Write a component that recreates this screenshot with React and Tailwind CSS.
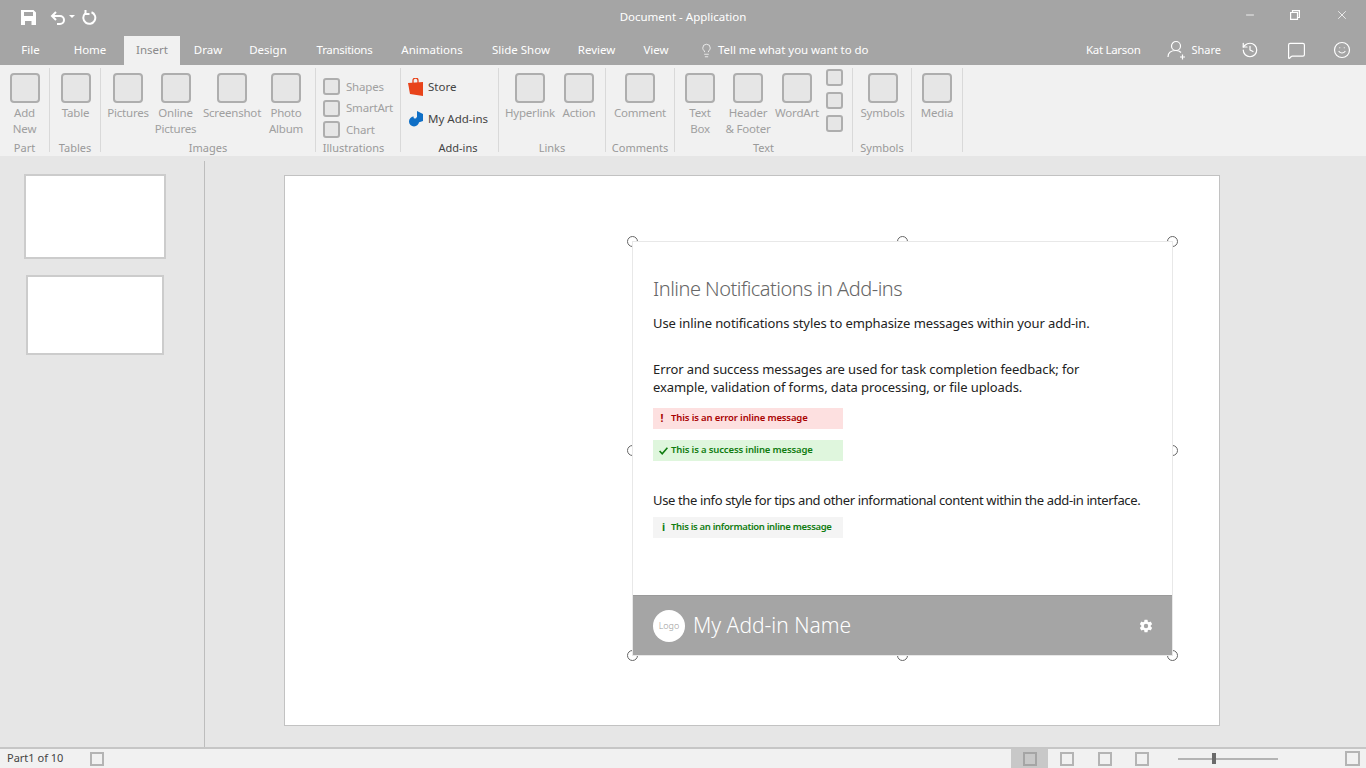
import { History, Lightbulb, MessageSquare, Smile, X, Minus } from "lucide-react";
import { IoSettingsSharp } from "react-icons/io5";

const tabs = [
  { label: "File", className: "w-[61px]" },
  { label: "Home", className: "w-[58px] mr-[5px]" },
  { label: "Insert", className: "w-[56px] bg-[#f1f1f1] text-[#8a8a8a]" },
  { label: "Draw", className: "w-[56px]" },
  { label: "Design", className: "w-[64px]" },
  { label: "Transitions", className: "w-[89px] tracking-[-0.3px]" },
  { label: "Animations", className: "w-[86px]" },
  { label: "Slide Show", className: "w-[92px]" },
  { label: "Review", className: "w-[59px]" },
  { label: "View", className: "w-[60px]" },
];

const BigBox = () => (
  <div className="w-[30px] h-[30px] rounded-[4px] border-2 border-[#aeaeae] bg-[#e6e6e6]" />
);

const SmallBox = () => (
  <div className="w-[17px] h-[17px] rounded-[3px] border-2 border-[#aeaeae] bg-[#e6e6e6] shrink-0" />
);

const BigItem = ({ lines, className }) => (
  <div className={`flex flex-col items-center pt-[5px] ${className}`}>
    <BigBox />
    <div className="mt-[2px] text-center text-[11.5px] tracking-[-0.2px] leading-[16px] text-[#a0a0a0] whitespace-nowrap">
      {lines.map((line) => (
        <div key={line}>{line}</div>
      ))}
    </div>
  </div>
);

const Group = ({ label, className, labelClass = "", dark, children }) => (
  <div className={`relative h-[84px] border-r border-[#d9d9d9] shrink-0 flex ${className}`}>
    {children}
    <div
      className={`absolute left-0 right-0 bottom-[-4px] text-center text-[11px] leading-[16px] ${labelClass} ${
        dark ? "text-[#444444]" : "text-[#999999]"
      }`}
    >
      {label}
    </div>
  </div>
);

const Handle = ({ className }) => (
  <div className={`absolute w-[11px] h-[11px] rounded-full border border-[#666666] bg-white ${className}`} />
);

const Message = ({ icon, text, className }) => (
  <div className={`w-[190px] h-[21px] flex items-center text-[9.5px] font-semibold ${className}`}>
    <span className="w-[18px] flex justify-center shrink-0">{icon}</span>
    <span className="whitespace-nowrap">{text}</span>
  </div>
);

const StatusBox = () => <div className="w-[14px] h-[14px] border-2 border-[#b4b4b4]" />;

export default function App() {
  return (
    <div
      className="w-[1366px] h-[768px] overflow-hidden flex flex-col bg-[#e6e6e6]"
      style={{ fontFamily: '"Noto Sans", "Open Sans", sans-serif' }}
    >
      {/* Title bar */}
      <div className="h-[36px] bg-[#a5a5a5] flex items-center relative shrink-0 text-white">
        <div className="flex items-center pl-[21px] pb-[2px]">
          <svg width="15" height="15" viewBox="0 0 15 15" fill="white">
            <path d="M0 0h12.5L15 2.5V15H0zM3 2v4h9V2zM4 11v4h6.5v-4z" fillRule="evenodd" />
          </svg>
          <svg className="ml-[14px]" width="16" height="15" viewBox="0 0 16 15" fill="none" stroke="white" strokeWidth="2">
            <path d="M6 2 2 6l4 4M2 6h8a4 4 0 0 1 0 8H7" />
          </svg>
          <svg className="ml-[3px]" width="6" height="4" viewBox="0 0 6 4" fill="white">
            <path d="M0 0h6L3 3z" />
          </svg>
          <svg className="ml-[7px]" width="15" height="15" viewBox="0 0 15 15" fill="none" stroke="white" strokeWidth="2">
            <path d="M9.5 2.2A6 6 0 1 1 3 3.6M3.5 0v4h4" />
          </svg>
        </div>
        <div className="absolute inset-x-0 text-center text-[11.5px] pb-[2px]">Document - Application</div>
        <div className="ml-auto flex items-center pr-[17px] pb-[6px]">
          <Minus size={12} strokeWidth={1.6} />
          <svg className="ml-[34px]" width="10" height="10" viewBox="0 0 10 10" fill="none" stroke="white" strokeWidth="1.2">
            <path d="M2.5 2.5V.6h6.9v6.9H7.5M.6 2.5h6.9v6.9H.6z" />
          </svg>
          <X className="ml-[35px]" size={14} strokeWidth={1.3} />
        </div>
      </div>

      {/* Tabs */}
      <div className="h-[29px] bg-[#a5a5a5] flex items-stretch text-white shrink-0 text-[11.5px] relative">
        {tabs.map((tab) => (
          <div key={tab.label} className={`flex items-center justify-center pb-[1px] whitespace-nowrap ${tab.className}`}>
            {tab.label}
          </div>
        ))}
        <div className="flex items-center ml-[13px] pb-[1px]">
          <Lightbulb size={15} strokeWidth={1.2} />
          <span className="ml-[4px] tracking-[-0.05px]">Tell me what you want to do</span>
        </div>
        <div className="ml-auto flex items-center pr-[15px] pb-[1px]">
          <span className="tracking-[-0.3px]">Kat Larson</span>
          <svg className="ml-[27px]" width="20" height="20" viewBox="0 0 20 20" fill="none" stroke="white" strokeWidth="1.2">
            <circle cx="9" cy="6" r="4.5" />
            <path d="M1 17c0-4 3-6.5 8-6.5 2 0 4 .8 5 2M15.5 14.5v5M13 17h5" />
          </svg>
          <span className="ml-[4px] text-[11px]">Share</span>
          <History className="ml-[20px]" size={18} strokeWidth={1.6} />
          <MessageSquare className="ml-[28px]" size={19} strokeWidth={1.5} />
          <Smile className="ml-[27px]" size={18} strokeWidth={1.6} />
        </div>
      </div>

      {/* Ribbon */}
      <div className="h-[91px] bg-[#f1f1f1] flex shrink-0 pt-[3px]">
        <Group label="Part" className="w-[50px]">
          <BigItem className="w-[49px]" lines={["Add", "New"]} />
        </Group>
        <Group label="Tables" className="w-[51px] pl-[1px]">
          <BigItem className="w-[49px]" lines={["Table"]} />
        </Group>
        <Group label="Images" className="w-[215px] pl-[3px]">
          <BigItem className="w-[48px]" lines={["Pictures"]} />
          <BigItem className="w-[47px]" lines={["Online", "Pictures"]} />
          <BigItem className="w-[66px]" lines={["Screenshot"]} />
          <BigItem className="w-[42px]" lines={["Photo", "Album"]} />
        </Group>
        <Group label="Illustrations" labelClass="pr-[9px]" className="w-[85px] pl-[7px]">
          <div className="flex flex-col gap-[4.5px] pt-[10px] text-[11.5px] tracking-[-0.2px] text-[#a0a0a0]">
            {["Shapes", "SmartArt", "Chart"].map((name) => (
              <div key={name} className="flex items-center gap-[6px] h-[17px]">
                <SmallBox />
                <span>{name}</span>
              </div>
            ))}
          </div>
        </Group>
        <Group label="Add-ins" dark labelClass="pl-[17px]" className="w-[98px] pl-[7px]">
          <div className="flex flex-col pt-[10px] text-[11.5px] text-[#444444]">
            <div className="flex items-center h-[18px]">
              <svg width="16" height="18" viewBox="0 0 16 18">
                <path d="M0 5 15 4v14L2 16z" fill="#e8431a" />
                <path d="M5 5V2.5a2.5 2.5 0 0 1 5 0V5" fill="none" stroke="#e8431a" strokeWidth="1.3" />
              </svg>
              <span className="ml-[4px]">Store</span>
            </div>
            <div className="flex items-center h-[16px] mt-[15px]">
              <svg className="ml-[1px]" width="15" height="16" viewBox="0 0 15 16">
                <path d="M8 0l6 3v7l-6 2z" fill="#0f6fc6" />
                <circle cx="5" cy="10.5" r="5" fill="#0f6fc6" />
                <circle cx="6" cy="6" r="1.5" fill="#f1f1f1" />
              </svg>
              <span className="ml-[4px]">My Add-ins</span>
            </div>
          </div>
        </Group>
        <Group label="Links" className="w-[107px] pl-[6px]">
          <BigItem className="w-[50px]" lines={["Hyperlink"]} />
          <BigItem className="w-[48px]" lines={["Action"]} />
        </Group>
        <Group label="Comments" className="w-[69px]">
          <BigItem className="w-[68px]" lines={["Comment"]} />
        </Group>
        <Group label="Text" className="w-[178px] pl-[5px]">
          <BigItem className="w-[40px]" lines={["Text", "Box"]} />
          <BigItem className="w-[56px]" lines={["Header", "& Footer"]} />
          <BigItem className="w-[42px]" lines={["WordArt"]} />
          <div className="ml-[8px] flex flex-col gap-[6px] pt-[1px] h-[66px]">
            <SmallBox />
            <SmallBox />
            <SmallBox />
          </div>
        </Group>
        <Group label="Symbols" className="w-[59px] pl-[1px]">
          <BigItem className="w-[58px]" lines={["Symbols"]} />
        </Group>
        <Group label="" className="w-[51px]">
          <BigItem className="w-[50px]" lines={["Media"]} />
        </Group>
      </div>

      {/* Workspace */}
      <div className="flex-1 flex min-h-0">
        <div className="w-[205px] shrink-0 pt-[5px]">
          <div className="h-full border-r border-[#bdbdbd] pt-[13px] flex flex-col items-center pr-[15px] gap-[16px]">
            <div className="w-[142px] h-[85px] bg-white border-2 border-[#cccccc]" />
            <div className="w-[138px] h-[80px] bg-white border-2 border-[#cccccc]" />
          </div>
        </div>
        <div className="flex-1 pt-[19px] pl-[79px]">
          <div className="w-[936px] h-[551px] bg-white border border-[#c2c2c2] pl-[347px] pt-[65px]">
            <div className="relative w-[541px] h-[415px]">
              <Handle className="left-[-5px] top-[-5px]" />
              <Handle className="left-[265px] top-[-5px]" />
              <Handle className="right-[-5px] top-[-5px]" />
              <Handle className="left-[-5px] top-[204px]" />
              <Handle className="right-[-5px] top-[204px]" />
              <Handle className="left-[-5px] bottom-[-5px]" />
              <Handle className="left-[265px] bottom-[-5px]" />
              <Handle className="right-[-5px] bottom-[-5px]" />
              <div className="relative h-full bg-white border border-[#e8e8e8] flex flex-col">
                <div className="flex-1 pl-[20px] text-[#222222]">
                  <h1 className="pt-[33px] text-[20px] tracking-[-0.5px] leading-[28px] font-light text-[#666666] whitespace-nowrap">
                    Inline Notifications in Add-ins
                  </h1>
                  <p className="mt-[11px] text-[13px] tracking-[-0.1px] leading-[18px] whitespace-nowrap">
                    Use inline notifications styles to emphasize messages within your add-in.
                  </p>
                  <p className="mt-[28px] text-[13px] tracking-[-0.1px] leading-[18px] whitespace-nowrap">
                    Error and success messages are used for task completion feedback; for
                    <br />
                    example, validation of forms, data processing, or file uploads.
                  </p>
                  <Message
                    className="mt-[12px] bg-[#fde0e0] text-[#a80000] tracking-[-0.13px]"
                    icon={<span className="font-bold text-[10.5px]">!</span>}
                    text="This is an error inline message"
                  />
                  <Message
                    className="mt-[11px] bg-[#dff6dd] text-[#107c10] tracking-[-0.14px]"
                    icon={
                      <svg className="ml-[3px]" width="9" height="8" viewBox="0 0 9 8" fill="none" stroke="#107c10" strokeWidth="1.6">
                        <path d="M.6 4 3.2 6.8 8.4.8" />
                      </svg>
                    }
                    text="This is a success inline message"
                  />
                  <p className="mt-[30px] text-[13px] tracking-[-0.37px] leading-[18px] whitespace-nowrap">
                    Use the info style for tips and other informational content within the add-in interface.
                  </p>
                  <Message
                    className="mt-[8px] bg-[#f4f4f4] text-[#107c10] tracking-[-0.32px]"
                    icon={<span className="font-bold text-[10.5px] ml-[3px]">i</span>}
                    text="This is an information inline message"
                  />
                </div>
                <div className="h-[60px] bg-[#a5a5a5] border-t border-[#9a9a9a] flex items-center pl-[20px] pr-[18px] text-white">
                  <div className="w-[32px] h-[32px] rounded-full bg-white flex items-center justify-center text-[9px] font-light text-[#9b9b9b]">
                    Logo
                  </div>
                  <span className="ml-[8px] text-[21px] font-light">My Add-in Name</span>
                  <IoSettingsSharp className="ml-auto mr-[1px]" size={14} />
                </div>
              </div>
            </div>
          </div>
        </div>
      </div>

      {/* Status bar */}
      <div className="h-[21px] shrink-0 bg-[#f1f1f1] border-t-2 border-[#c6c6c6] flex items-center text-[11px] text-[#444444]">
        <span className="ml-[7px] w-[83px]">Part1 of 10</span>
        <StatusBox />
        <div className="ml-[907px] w-[37px] h-full bg-[#c8c8c8] flex items-center justify-center">
          <div className="w-[14px] h-[14px] border-2 border-[#a5a5a5]" />
        </div>
        <div className="ml-[12px]">
          <StatusBox />
        </div>
        <div className="ml-[24px]">
          <StatusBox />
        </div>
        <div className="ml-[23px]">
          <StatusBox />
        </div>
        <div className="ml-[29px] w-[100px] h-[2px] bg-[#b4b4b4] relative">
          <div className="absolute left-[34px] top-[-5px] w-[4px] h-[11px] bg-[#6a6a6a]" />
        </div>
        <div className="ml-[67px]">
          <div className="w-[15px] h-[15px] border-2 border-[#b4b4b4]" />
        </div>
      </div>
    </div>
  );
}
